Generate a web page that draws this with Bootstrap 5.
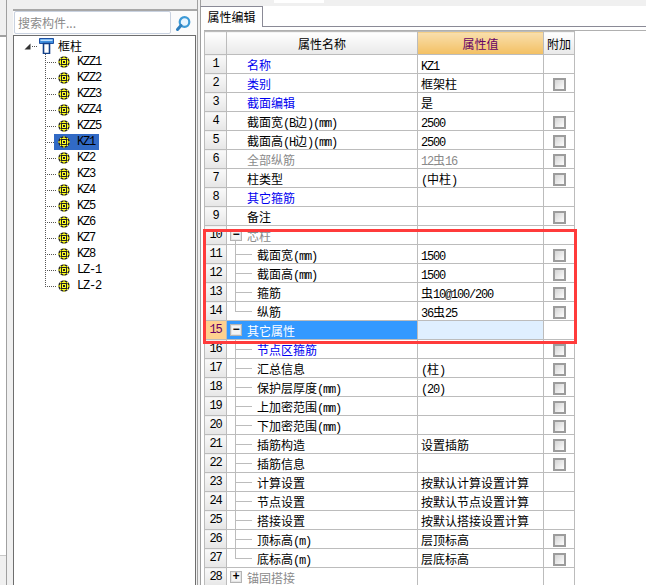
<!DOCTYPE html>
<html lang="zh">
<head>
<meta charset="utf-8">
<title>属性编辑</title>
<link href="https://cdn.jsdelivr.net/npm/bootstrap@5.3.0/dist/css/bootstrap.min.css" rel="stylesheet">
<style>
html,body{height:585px;overflow:hidden;background:#f0f0f0}
body{font:12px/18px "Noto Sans CJK SC",sans-serif;color:#000}
.lat{font-family:"Liberation Mono",monospace;font-size:12px;letter-spacing:-1.2px;line-height:1}
.shell{width:646px;height:585px;overflow:hidden}
.edge{width:7px;flex:none;border-right:1px solid #a0a0a0;background:#fff}
.edge-top{height:37px;background:#f0f0f0;border-bottom:2px solid #a0a0a0}
.edge-mid{height:518px}
.edge-bot{height:30px;background:#f0f0f0;border-top:1px solid #c8c8c8}
.leftcol{width:190px;flex:none;padding:9px 0 0 6px}
.searchrow{height:26px;background:#fbfbfb;border-top:2px solid #a8a8a8}
.searchbox{width:157px;height:23px;margin-left:1px;padding:0 3px;border:1px solid #c9d2e0;border-radius:2px;background:#fff;color:#8a8a8a;font-size:12px;line-height:21px}
.searchbox::placeholder{color:#8a8a8a;opacity:1}
.treebox{width:183px;height:560px;background:#fff;border:1px solid #6e6e6e;border-bottom:0;padding:2px 0 0 10px}
.troot{height:16px;line-height:16px}
.troot svg{flex:none}
.rootdots{width:6px;height:1px;margin:0 1px;background:repeating-linear-gradient(90deg,#555 0 1px,transparent 1px 2px)}
.tnode{height:16px;line-height:16px;margin-left:21px;padding-left:1px;background:
 repeating-linear-gradient(90deg,#555 0 1px,transparent 1px 2px) 0 8px/12px 1px no-repeat,
 repeating-linear-gradient(#555 0 1px,transparent 1px 2px) 0 0/1px 100% no-repeat}
.tlast{background:
 repeating-linear-gradient(90deg,#555 0 1px,transparent 1px 2px) 0 8px/12px 1px no-repeat,
 repeating-linear-gradient(#555 0 1px,transparent 1px 2px) 0 0/1px 9px no-repeat}
.tlist{list-style:none;padding:0;margin:0}
.tnode svg{margin-left:12px;flex:none}
.tlabel{padding:0 0 0 7px;height:16px;line-height:16px}
.tsel{background:linear-gradient(#316ac5,#316ac5) 9px 0/45px 16px no-repeat,
 repeating-linear-gradient(90deg,#555 0 1px,transparent 1px 2px) 0 8px/9px 1px no-repeat,
 repeating-linear-gradient(#555 0 1px,transparent 1px 2px) 0 0/1px 100% no-repeat}
.divline{width:1px;flex:none;background:#a0a0a0;margin-right:2px}
.rightcol{flex:1;background:#fff;border-left:1px solid #a0a0a0;min-width:0}
.topband{height:6px;background:#f0f0f0}
.topnotch{width:50px;height:3px;margin-left:73px;background:#fff}
.tabrow{height:21px;border-bottom:1px solid #8a8a96;background:#fff}
.tabitem{width:63px;height:21px;background:#fff;border:1px solid #8a8a96;border-bottom:0;border-left-color:#a0a0a0;text-align:center;line-height:20px;margin-left:-1px}
.tablewrap{border-top:1px solid #b0b0b0;margin:3px 0 0 3px;position:relative}
.proptable{table-layout:fixed;width:371px;border-collapse:collapse;margin:0}
.proptable td,.proptable th{border:1px solid #bcbcbc;padding:1px 3px 0;height:19px;line-height:17px;font-weight:400;white-space:nowrap;overflow:hidden;background:#fff}
.proptable .hd th{height:23px;text-align:center;background:linear-gradient(#fff,#e9e9e9)}
.proptable .hd .hv{background:linear-gradient(#f9dfae,#f3c062);color:#660066}
.proptable .rn{padding:1px 0 0;text-align:center;background:linear-gradient(#f9f9f9,#e6e6e6)}
.proptable .nm{padding-left:20px}
.proptable .sub{padding-left:30px}
.proptable .grp{padding-left:3px;padding-right:0}
.proptable .grpl{background:linear-gradient(#bcbcbc,#bcbcbc) 8px 14px/1px 5px no-repeat,#fff}
.proptable .ck{padding:0;text-align:center}
.proptable .br{background:linear-gradient(#bcbcbc,#bcbcbc) 8px 0/1px 100% no-repeat,linear-gradient(#bcbcbc,#bcbcbc) 8px 9px/17px 1px no-repeat,#fff}
.proptable .brl{background:linear-gradient(#bcbcbc,#bcbcbc) 8px 0/1px 10px no-repeat,linear-gradient(#bcbcbc,#bcbcbc) 8px 9px/17px 1px no-repeat,#fff}
.proptable .blue{color:#0000f0}
.proptable .grey{color:#8a8a8a}
.proptable .rowcur .rn{background:#ffd18f;color:#660066}
.proptable .rowcur .nmcur{background:#3399ff;color:#fff}
.proptable .rowcur .vcur{background:#dfefff}
.exbox{display:inline-flex;width:12px;height:12px;border:1px solid #b4b4b4;box-shadow:inset 0 0 0 1px #e4e4e4;background:#f4f4f4;color:#000;align-items:center;justify-content:center;font:700 12px/10px "Liberation Mono",monospace;vertical-align:top;margin:2px 5px 0 0}
.chk.form-check-input{width:13px;height:13px;margin:2px 0 0 9px;border:2px solid #9c9c9c;border-radius:0;background:linear-gradient(135deg,#d4d4d4,#fdfdfd);float:none;display:block}
.redbox{position:absolute;left:-1px;top:198px;width:374px;height:115px;border:3px solid #ff3b3b;pointer-events:none}
</style>
</head>
<body>
<svg width="0" height="0" class="position-absolute">
<symbol id="gear" viewBox="0 0 12 12">
<circle cx="6" cy="6" r="5.700" fill="#222"/>
<circle cx="6" cy="6" r="4.300" fill="#ffff22"/>
<path d="M6 0v12M0 6h12M2 2l8 8M10 2l-8 8" stroke="#ffff22"/>
<rect x="3.500" y="3.500" width="5" height="5" fill="#ffff22" stroke="#222"/>
<rect x="5" y="5" width="2" height="2" fill="#222"/>
</symbol>
</svg>
<div class="shell d-flex">
  <div class="edge d-flex flex-column">
    <div class="edge-top"></div>
    <div class="edge-mid"></div>
    <div class="edge-bot"></div>
  </div>
  <div class="leftcol">
    <div class="searchrow d-flex align-items-start">
      <input class="searchbox" placeholder="搜索构件...">
      <svg class="ms-1 mt-1" width="17" height="17" viewBox="0 0 17 17"><circle cx="9.500" cy="7" r="4.800" fill="#e8f5ff" stroke="#3d9ad6" stroke-width="2.200"/><path d="M6 10.500l-3.500 4" stroke="#2f7fbe" stroke-width="3" stroke-linecap="round"/></svg>
    </div>
    <div class="treebox">
      <div class="troot d-flex align-items-center">
        <svg width="7" height="7" viewBox="0 0 7 7"><path d="M6.500 0.500v6h-6z" fill="#333"/></svg>
        <span class="rootdots"></span>
        <svg width="15" height="16" viewBox="0 0 15 16"><path d="M.5.5h14v5h-14z" fill="#3f8fe0" stroke="#1e50a2"/><path d="M4.500 5.500h6v10h-6z" fill="#fff" stroke="#123f88" stroke-width="1.600"/><path d="M1.500 1.500h12v1.500h-12z" fill="#bfe0ff"/></svg>
        <span class="ms-1">框柱</span>
      </div>
      <ul class="tlist">
        <li class="tnode d-flex align-items-center"><svg width="12" height="12"><use href="#gear"/></svg><span class="tlabel lat">KZZ1</span></li>
        <li class="tnode d-flex align-items-center"><svg width="12" height="12"><use href="#gear"/></svg><span class="tlabel lat">KZZ2</span></li>
        <li class="tnode d-flex align-items-center"><svg width="12" height="12"><use href="#gear"/></svg><span class="tlabel lat">KZZ3</span></li>
        <li class="tnode d-flex align-items-center"><svg width="12" height="12"><use href="#gear"/></svg><span class="tlabel lat">KZZ4</span></li>
        <li class="tnode d-flex align-items-center"><svg width="12" height="12"><use href="#gear"/></svg><span class="tlabel lat">KZZ5</span></li>
        <li class="tnode d-flex align-items-center tsel"><svg width="12" height="12"><use href="#gear"/></svg><span class="tlabel lat">KZ1</span></li>
        <li class="tnode d-flex align-items-center"><svg width="12" height="12"><use href="#gear"/></svg><span class="tlabel lat">KZ2</span></li>
        <li class="tnode d-flex align-items-center"><svg width="12" height="12"><use href="#gear"/></svg><span class="tlabel lat">KZ3</span></li>
        <li class="tnode d-flex align-items-center"><svg width="12" height="12"><use href="#gear"/></svg><span class="tlabel lat">KZ4</span></li>
        <li class="tnode d-flex align-items-center"><svg width="12" height="12"><use href="#gear"/></svg><span class="tlabel lat">KZ5</span></li>
        <li class="tnode d-flex align-items-center"><svg width="12" height="12"><use href="#gear"/></svg><span class="tlabel lat">KZ6</span></li>
        <li class="tnode d-flex align-items-center"><svg width="12" height="12"><use href="#gear"/></svg><span class="tlabel lat">KZ7</span></li>
        <li class="tnode d-flex align-items-center"><svg width="12" height="12"><use href="#gear"/></svg><span class="tlabel lat">KZ8</span></li>
        <li class="tnode d-flex align-items-center"><svg width="12" height="12"><use href="#gear"/></svg><span class="tlabel lat">LZ-1</span></li>
        <li class="tnode tlast d-flex align-items-center"><svg width="12" height="12"><use href="#gear"/></svg><span class="tlabel lat">LZ-2</span></li>
      </ul>
    </div>
  </div>
  <div class="divline"></div>
  <div class="rightcol">
    <div class="topband"><div class="topnotch"></div></div>
    <div class="tabrow"><div class="tabitem">属性编辑</div></div>
    <div class="tablewrap">
      <table class="proptable">
        <colgroup><col style="width:22px"><col style="width:191px"><col style="width:126px"><col style="width:31px"></colgroup>
        <tr class="hd"><th></th><th>属性名称</th><th class="hv">属性值</th><th class="p-0">附加</th></tr>
        <tr><td class="rn lat">1</td><td class="nm blue">名称</td><td><span class="lat">KZ1</span></td><td class="ck"></td></tr>
        <tr><td class="rn lat">2</td><td class="nm blue">类别</td><td>框架柱</td><td class="ck"><input type="checkbox" class="form-check-input chk"></td></tr>
        <tr><td class="rn lat">3</td><td class="nm blue">截面编辑</td><td>是</td><td class="ck"></td></tr>
        <tr><td class="rn lat">4</td><td class="nm">截面宽<span class="lat">(B</span>边<span class="lat">)(mm)</span></td><td><span class="lat">2500</span></td><td class="ck"><input type="checkbox" class="form-check-input chk"></td></tr>
        <tr><td class="rn lat">5</td><td class="nm">截面高<span class="lat">(H</span>边<span class="lat">)(mm)</span></td><td><span class="lat">2500</span></td><td class="ck"><input type="checkbox" class="form-check-input chk"></td></tr>
        <tr><td class="rn lat">6</td><td class="nm grey">全部纵筋</td><td class="grey"><span class="lat">12</span>虫<span class="lat">16</span></td><td class="ck"><input type="checkbox" class="form-check-input chk"></td></tr>
        <tr><td class="rn lat">7</td><td class="nm">柱类型</td><td><span class="lat">(</span>中柱<span class="lat">)</span></td><td class="ck"><input type="checkbox" class="form-check-input chk"></td></tr>
        <tr><td class="rn lat">8</td><td class="nm blue">其它箍筋</td><td></td><td class="ck"></td></tr>
        <tr><td class="rn lat">9</td><td class="nm">备注</td><td></td><td class="ck"><input type="checkbox" class="form-check-input chk"></td></tr>
        <tr><td class="rn lat">10</td><td class="grp grpl grey"><span class="exbox">−</span>芯柱</td><td></td><td class="ck"></td></tr>
        <tr><td class="rn lat">11</td><td class="sub br">截面宽<span class="lat">(mm)</span></td><td><span class="lat">1500</span></td><td class="ck"><input type="checkbox" class="form-check-input chk"></td></tr>
        <tr><td class="rn lat">12</td><td class="sub br">截面高<span class="lat">(mm)</span></td><td><span class="lat">1500</span></td><td class="ck"><input type="checkbox" class="form-check-input chk"></td></tr>
        <tr><td class="rn lat">13</td><td class="sub br">箍筋</td><td>虫<span class="lat">10@100/200</span></td><td class="ck"><input type="checkbox" class="form-check-input chk"></td></tr>
        <tr><td class="rn lat">14</td><td class="sub brl">纵筋</td><td><span class="lat">36</span>虫<span class="lat">25</span></td><td class="ck"><input type="checkbox" class="form-check-input chk"></td></tr>
        <tr class="rowcur"><td class="rn lat">15</td><td class="grp nmcur"><span class="exbox">−</span>其它属性</td><td class="vcur"></td><td class="ck"></td></tr>
        <tr><td class="rn lat">16</td><td class="sub br blue">节点区箍筋</td><td></td><td class="ck"><input type="checkbox" class="form-check-input chk"></td></tr>
        <tr><td class="rn lat">17</td><td class="sub br">汇总信息</td><td><span class="lat">(</span>柱<span class="lat">)</span></td><td class="ck"><input type="checkbox" class="form-check-input chk"></td></tr>
        <tr><td class="rn lat">18</td><td class="sub br">保护层厚度<span class="lat">(mm)</span></td><td><span class="lat">(20)</span></td><td class="ck"><input type="checkbox" class="form-check-input chk"></td></tr>
        <tr><td class="rn lat">19</td><td class="sub br">上加密范围<span class="lat">(mm)</span></td><td></td><td class="ck"><input type="checkbox" class="form-check-input chk"></td></tr>
        <tr><td class="rn lat">20</td><td class="sub br">下加密范围<span class="lat">(mm)</span></td><td></td><td class="ck"><input type="checkbox" class="form-check-input chk"></td></tr>
        <tr><td class="rn lat">21</td><td class="sub br">插筋构造</td><td>设置插筋</td><td class="ck"><input type="checkbox" class="form-check-input chk"></td></tr>
        <tr><td class="rn lat">22</td><td class="sub br">插筋信息</td><td></td><td class="ck"><input type="checkbox" class="form-check-input chk"></td></tr>
        <tr><td class="rn lat">23</td><td class="sub br">计算设置</td><td>按默认计算设置计算</td><td class="ck"></td></tr>
        <tr><td class="rn lat">24</td><td class="sub br">节点设置</td><td>按默认节点设置计算</td><td class="ck"></td></tr>
        <tr><td class="rn lat">25</td><td class="sub br">搭接设置</td><td>按默认搭接设置计算</td><td class="ck"></td></tr>
        <tr><td class="rn lat">26</td><td class="sub br">顶标高<span class="lat">(m)</span></td><td>层顶标高</td><td class="ck"><input type="checkbox" class="form-check-input chk"></td></tr>
        <tr><td class="rn lat">27</td><td class="sub brl">底标高<span class="lat">(m)</span></td><td>层底标高</td><td class="ck"><input type="checkbox" class="form-check-input chk"></td></tr>
        <tr><td class="rn lat">28</td><td class="grp grey"><span class="exbox">+</span>锚固搭接</td><td></td><td class="ck"></td></tr>
      </table>
      <div class="redbox"></div>
    </div>
  </div>
</div>
</body>
</html>
